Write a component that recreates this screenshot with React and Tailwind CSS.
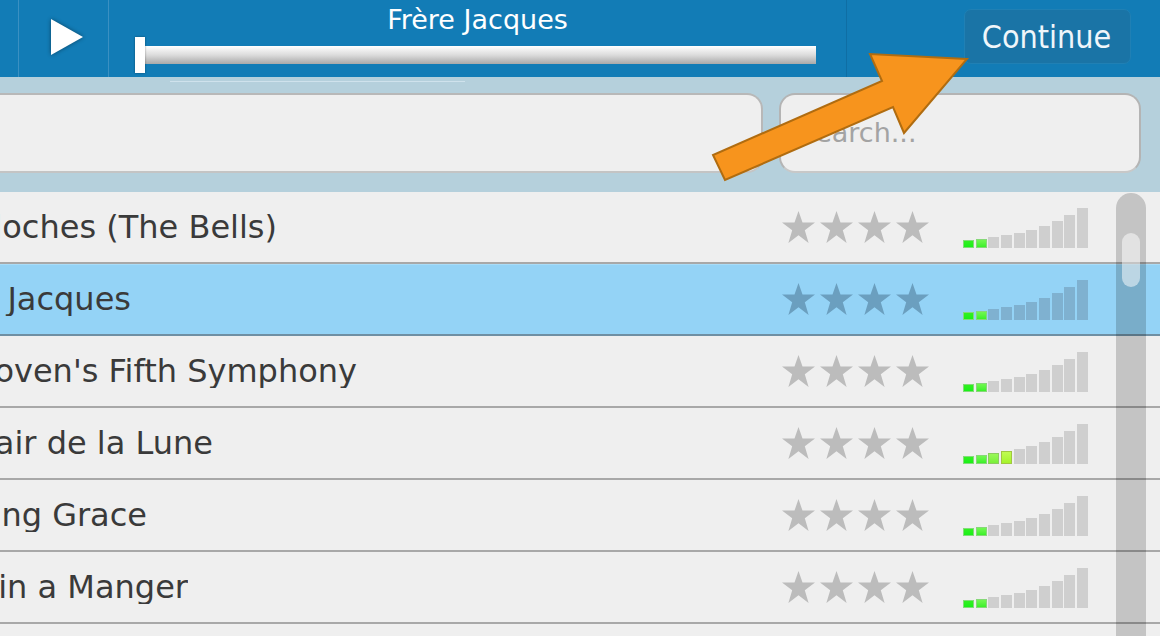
const rows = [
  { title: "Les Cloches (The Bells)", end: "w-[277px]", green: 2 },
  { title: "Frère Jacques", end: "w-[131px]", green: 2, selected: true },
  { title: "Beethoven's Fifth Symphony", end: "w-[357px]", green: 2 },
  { title: "Au Clair de la Lune", end: "w-[213px]", green: 4 },
  { title: "Amazing Grace", end: "w-[147px]", green: 2 },
  { title: "Away in a Manger", end: "w-[188px]", green: 2 },
];

const barHeights = [
  "h-[8px]", "h-[9px]", "h-[11px]", "h-[13px]", "h-[15px]",
  "h-[18px]", "h-[22px]", "h-[27px]", "h-[33px]", "h-[40px]",
];

const greenStyles = [
  "bg-gradient-to-b from-[#30f020] to-[#18f018] border border-[#82dc78]",
  "bg-gradient-to-b from-[#70f850] to-[#38f028] border border-[#86d878]",
  "bg-gradient-to-b from-[#98f858] to-[#78f038] border border-[#8ccc60]",
  "bg-gradient-to-b from-[#c0fc50] to-[#a4f428] border border-[#a0c840]",
];

function Star({ selected }) {
  return (
    <svg width="33" height="32" viewBox="0 0 33 32" className={selected ? "text-[#6b9fbf]" : "text-[#bcbcbc]"}>
      <polygon
        fill="currentColor"
        points="16.5,0 20.5,11.6 33,11.6 22.8,19.2 26.6,32 16.5,24.2 6.4,32 10.2,19.2 0,11.6 12.5,11.6"
      />
    </svg>
  );
}

function Bars({ green, selected }) {
  return (
    <div className="flex items-end gap-[1.67px] w-[125px]">
      {barHeights.map((h, i) => (
        <div
          key={i}
          className={`w-[11px] ${h} ${
            i < green ? greenStyles[i] : selected ? "bg-[#7fb1d0]" : "bg-[#cfcfcf]"
          }`}
        />
      ))}
    </div>
  );
}

function Row({ row }) {
  return (
    <div
      className={`flex items-center h-[72px] border-b-2 ${
        row.selected
          ? "bg-[#94d3f6] border-[#6f8fa3] shadow-[inset_0_1px_0_#a8dcf8]"
          : "bg-[#efefef] border-[#a8a8a8]"
      }`}
    >
      <div
        className={`${row.end} flex justify-end whitespace-nowrap text-[32px] leading-none text-[#3a3a3a] overflow-hidden pb-[1px]`}
      >
        <span className="shrink-0">{row.title}</span>
      </div>
      <div className="flex-1" />
      <div className="flex gap-[5px] mr-[34px] pb-[1px]">
        <Star selected={row.selected} />
        <Star selected={row.selected} />
        <Star selected={row.selected} />
        <Star selected={row.selected} />
      </div>
      <div className="mr-[72px] self-end pb-[14px]">
        <Bars green={row.green} selected={row.selected} />
      </div>
    </div>
  );
}

export default function App() {
  return (
    <div
      className="relative w-[1160px] h-[636px] overflow-hidden bg-[#efefef]"
      style={{ fontFamily: '"DejaVu Sans", sans-serif' }}
    >
      <header className="flex h-[77px] bg-[#127cb6] text-white">
        <div className="w-[19px] border-r border-[#3a90c2]" />
        <div className="w-[90px] flex items-center justify-center border-r border-[#3a90c2] pb-[3px] pl-[6px]">
          <svg width="36" height="40" viewBox="0 0 36 40" className="drop-shadow-[0_0_2px_rgba(0,0,0,0.45)]">
            <polygon points="2,2 34,20 2,38" fill="#fff" stroke="none" />
          </svg>
        </div>
        <div className="w-[738px] border-r border-[#0f6ea4] flex flex-col pl-[26px] pr-[30px]">
          <div className="text-center text-[27px] leading-none pt-[6px] -ml-[26px] -mr-[30px]">Frère Jacques</div>
          <div className="relative mt-[13px] h-[18px] ml-[10px] bg-gradient-to-b from-[#ffffff] via-[#dcdcdc] to-[#a9a9a9]">
            <div className="absolute -left-[10px] -top-[9px] w-[10px] h-[36px] bg-white shadow-[0_0_2px_rgba(0,0,0,0.4)]" />
          </div>
        </div>
        <div className="flex-1 flex justify-end items-start pt-[9px] pr-[29px]">
          <div
            className="w-[167px] h-[55px] flex items-center justify-center rounded-[7px] bg-[#1a74a6] border border-[#2080b4] text-[32px] leading-none text-[#f0f6fa] pr-[2px]"
            style={{ fontFamily: '"DejaVu Sans Condensed", "DejaVu Sans", sans-serif', fontStretch: "condensed" }}
          >
            Continue
          </div>
        </div>
      </header>

      <div className="relative flex gap-[16px] h-[115px] bg-[#b5d0dc] pt-[16px] pb-[19px] pr-[19px]">
        <div className="absolute left-[170px] top-[4px] w-[295px] h-px bg-[#cfe2ec]" />
        <div className="w-[783px] -ml-[20px] shrink-0 h-[80px] rounded-[16px] bg-[#efefef] border-2 border-[#b8b8b8] border-b-[#c4c4c4]" />
        <div className="flex-1 h-[80px] rounded-[16px] bg-[#efefef] border-2 border-[#b4b4b4] border-b-[#c8c8c8] flex items-center pl-[17px] text-[27px] text-[#a3a3a3]">
          Search...
        </div>
      </div>

      <main>
        {rows.map((row) => (
          <Row key={row.title} row={row} />
        ))}
        <div className="h-[20px] bg-[#efefef]" />
      </main>

      <div className="absolute left-[1116px] top-[193px] w-[30px] h-[460px] rounded-t-[15px] bg-black/[0.18]">
        <div className="absolute left-[6px] top-[40px] w-[18px] h-[54px] rounded-[9px] bg-white/50" />
      </div>

      <svg className="absolute left-0 top-0 pointer-events-none" width="1160" height="636">
        <polygon
          points="967,59 870,54 882,81 713,155 725,180 893,107 904,133"
          fill="#f7941d"
          stroke="#b06c10"
          strokeWidth="2"
        />
      </svg>
    </div>
  );
}
